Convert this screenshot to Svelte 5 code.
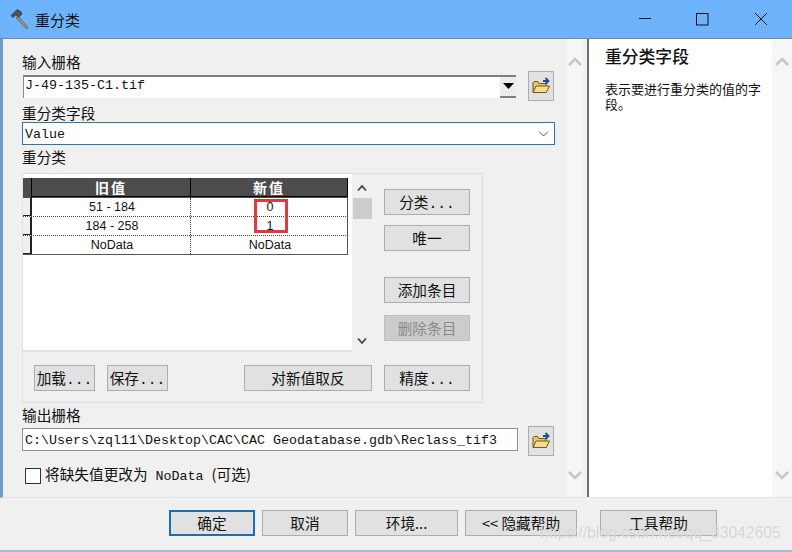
<script lang="ts">
    const rows = [
        { oldVal: '51 - 184', newVal: '0' },
        { oldVal: '184 - 258', newVal: '1' },
        { oldVal: 'NoData', newVal: 'NoData' }
    ];
    const sideButtons = [
        { label: '分类...', cls: 'gap-a' },
        { label: '唯一', cls: 'gap-b' },
        { label: '添加条目', cls: 'gap-c' },
        { label: '删除条目', cls: 'gap-d', disabled: true }
    ];
    const footerButtons = [
        { label: '确定', cls: 'w-ok primary' },
        { label: '取消', cls: 'w-ok' },
        { label: '环境...', cls: 'w-env' },
        { label: '<< 隐藏帮助', cls: 'w-hide' },
        { label: '工具帮助', cls: 'w-tool' }
    ];
</script>

{#snippet folderIcon()}
    <svg width="20" height="18" viewBox="0 0 20 18">
        <path d="M2 5.5 L2 15.5 L15 15.5 L15 6.5 L8 6.5 L6.8 4.5 L3 4.5 Z" fill="#e9c766" stroke="#6d5a25" stroke-width="1" />
        <path d="M2.2 15.5 L5 9 L18.5 9 L15.2 15.5 Z" fill="#f6dd8a" stroke="#6d5a25" stroke-width="1" />
        <path d="M12 4 L16 4 M14.5 1 L17.5 4 L14.5 7" fill="none" stroke="#1f4e8c" stroke-width="1.8" />
    </svg>
{/snippet}

{#snippet scrollColumn(cls)}
    <div class="vscroll {cls}">
        <svg width="16" height="10" viewBox="0 0 16 10"><path d="M2 8 L8 2 L14 8" fill="none" stroke="#c6c6c6" stroke-width="2.5" /></svg>
        <svg width="16" height="10" viewBox="0 0 16 10"><path d="M2 2 L8 8 L14 2" fill="none" stroke="#c6c6c6" stroke-width="2.5" /></svg>
    </div>
{/snippet}

<div class="window">
    <header class="titlebar">
        <svg class="hammer" width="22" height="22" viewBox="0 0 22 22">
            <path d="M9 8 L19 19.5 L17.5 21 L7 10 Z" fill="#9a8f7c" stroke="#5f574a" stroke-width="0.7" />
            <path d="M2 7.5 L8 1.5 L12 3.5 L13 6 L9.5 9.5 L7 7 L3.5 9.5 Z" fill="#4e5358" stroke="#33373a" stroke-width="0.6" />
        </svg>
        <span class="title">重分类</span>
        <div class="winbtns">
            <svg width="14" height="14" viewBox="0 0 14 14"><path d="M1 6.5 H13" stroke="#111" stroke-width="1" /></svg>
            <svg width="14" height="14" viewBox="0 0 14 14"><rect x="0.5" y="1.5" width="11.5" height="11.5" fill="none" stroke="#111" stroke-width="1" /></svg>
            <svg width="14" height="14" viewBox="0 0 14 14"><path d="M1 1 L13 13 M13 1 L1 13" stroke="#111" stroke-width="1" /></svg>
        </div>
    </header>

    <div class="body">
        <main class="pane">
            <div class="label first">输入栅格</div>
            <div class="input-row">
                <div class="input sunken">
                    <span class="mono">J-49-135-C1.tif</span>
                    <div class="drop"><svg width="11" height="6" viewBox="0 0 11 6"><path d="M0 0 H11 L5.5 6 Z" fill="#000" /></svg></div>
                </div>
                <button class="folder">{@render folderIcon()}</button>
            </div>
            <div class="label second">重分类字段</div>
            <div class="combo">
                <span class="mono">Value</span>
                <svg width="11" height="6" viewBox="0 0 11 6"><path d="M1 0.5 L5.5 5 L10 0.5" fill="none" stroke="#555" stroke-width="1" /></svg>
            </div>
            <div class="label third">重分类</div>

            <section class="group">
                <div class="table-row">
                    <div class="table-area">
                        <div class="table">
                            <div class="thead">
                                <div class="sel"></div>
                                <div class="th">旧值</div>
                                <div class="th">新值</div>
                            </div>
                            {#each rows as row}
                                <div class="tr">
                                    <div class="sel"></div>
                                    <div class="td">{row.oldVal}</div>
                                    <div class="td">{row.newVal}</div>
                                </div>
                            {/each}
                            <div class="redbox"></div>
                        </div>
                        <div class="tscroll">
                            <svg class="up" width="12" height="8" viewBox="0 0 12 8"><path d="M2 6.5 L6 2 L10 6.5" fill="none" stroke="#444" stroke-width="1.8" /></svg>
                            <div class="thumb"></div>
                            <svg class="down" width="12" height="8" viewBox="0 0 12 8"><path d="M2 1.5 L6 6 L10 1.5" fill="none" stroke="#444" stroke-width="1.8" /></svg>
                        </div>
                    </div>
                    <div class="side">
                        {#each sideButtons as b}
                            <button class="btn side-btn {b.cls}" class:disabled={b.disabled}>{b.label}</button>
                        {/each}
                    </div>
                </div>
                <div class="group-foot">
                    <button class="btn w-load">加载...</button>
                    <button class="btn w-load save">保存...</button>
                    <button class="btn w-invert">对新值取反</button>
                    <button class="btn w-prec">精度...</button>
                </div>
            </section>

            <div class="label fourth">输出栅格</div>
            <div class="input-row out">
                <div class="input plain"><span class="mono">C:\Users\zql11\Desktop\CAC\CAC Geodatabase.gdb\Reclass_tif3</span></div>
                <button class="folder">{@render folderIcon()}</button>
            </div>
            <div class="check-row">
                <span class="checkbox"></span>
                <span class="check-text">将缺失值更改为<span class="mono">{' NoData '}</span>(可选)</span>
            </div>
        </main>

        {@render scrollColumn('narrow')}
        <div class="divider"></div>

        <aside class="help">
            <h2>重分类字段</h2>
            <p>表示要进行重分类的值的字段。</p>
        </aside>
        {@render scrollColumn('')}
    </div>

    <footer class="footer">
        {#each footerButtons as b}
            <button class="btn {b.cls}">{b.label}</button>
        {/each}
    </footer>

    <div class="watermark">https://blog.csdn.net/qq_33042605</div>
</div>

<style>
    :global(body) {
        margin: 0;
    }

    .window {
        position: relative;
        width: 792px;
        height: 552px;
        display: flex;
        flex-direction: column;
        background: #f0f0f0;
        font-family: "Noto Sans CJK SC", "Liberation Sans", sans-serif;
        font-size: 14.67px;
        color: #111;
        overflow: hidden;
        box-shadow: inset 0 -2px 0 #8fc3e8;
    }

    .titlebar {
        height: 38px;
        flex: none;
        display: flex;
        align-items: center;
        background: #6db4fc;
        border-bottom: 1px solid #7d8790;
    }

    .hammer {
        margin-left: 9px;
    }

    .title {
        margin-left: 4px;
        font-size: 15px;
    }

    .winbtns {
        margin-left: auto;
        margin-right: 24px;
        display: flex;
        gap: 44px;
    }

    .body {
        flex: none;
        height: 458px;
        display: flex;
        border-left: 3px solid #6d9cc8;
        border-bottom: 1px solid #e2e2e2;
    }

    .pane {
        width: 563px;
        flex: none;
        box-sizing: border-box;
        padding-left: 19px;
        background: #f0f0f0;
    }

    .label {
        height: 16px;
        line-height: 16px;
        white-space: nowrap;
    }

    .first { margin-top: 15px; }
    .second { margin-top: 4px; }
    .third { margin-top: 4px; }
    .fourth { margin-top: 4px; }

    .mono {
        font-family: "Liberation Mono", "Noto Sans CJK SC", monospace;
        font-size: 13.33px;
        white-space: pre;
    }

    .input-row {
        width: 531px;
        height: 30px;
        margin-top: 1px;
        margin-left: 1px;
        display: flex;
        align-items: center;
        justify-content: space-between;
    }

    .input-row.out {
        width: 532px;
        margin-top: 3px;
        margin-left: 0;
        align-items: flex-start;
    }

    .input {
        box-sizing: border-box;
        display: flex;
        align-items: center;
        background: #fff;
    }

    .input.sunken {
        width: 493px;
        height: 23px;
        border-top: 2px solid #7f7f7f;
        border-left: 1px solid #8a8a8a;
        padding-left: 1px;
    }

    .input.sunken .mono {
        margin-bottom: 4px;
    }

    .input.sunken .drop {
        margin-left: auto;
        width: 16px;
        height: 21px;
        background: #ececec;
        border-bottom: 2px solid #7f7f7f;
        box-sizing: border-box;
        display: flex;
        align-items: center;
        justify-content: center;
    }

    .input.plain {
        width: 496px;
        height: 23px;
        margin-top: 2px;
        border: 1px solid #8f8f8f;
        padding-left: 2px;
    }

    .input.plain .mono {
        margin-top: 2px;
    }

    .folder {
        width: 26px;
        height: 30px;
        padding: 0;
        box-sizing: border-box;
        border: 1px solid #adadad;
        background: #e1e1e1;
        display: flex;
        align-items: center;
        justify-content: center;
    }

    .combo {
        box-sizing: border-box;
        width: 533px;
        height: 23px;
        margin-top: 1px;
        display: flex;
        align-items: center;
        justify-content: space-between;
        padding: 0 5px 0 2px;
        background: #fff;
        border: 1px solid #2f74ab;
    }

    .combo .mono {
        margin-top: 2px;
    }

    .group {
        box-sizing: border-box;
        width: 461px;
        height: 230px;
        margin-top: 8px;
        border: 1px solid #dcdcdc;
        border-left-color: #e2e2e2;
    }

    .table-row {
        display: flex;
    }

    .table-area {
        width: 349px;
        height: 178px;
        display: flex;
        padding-top: 4px;
        box-sizing: border-box;
        background: #fff;
        border-bottom: 2px solid #e2e2e2;
    }

    .table {
        position: relative;
        width: 325px;
        flex: none;
        background: #fff;
        align-self: flex-start;
        border-bottom: 1px solid #555;
    }

    .thead, .tr {
        display: grid;
        grid-template-columns: 9px 159px 157px;
    }

    .thead {
        height: 20px;
        background: #4c4c4c;
    }

    .thead .sel {
        border-right: 1px solid #000;
    }

    .th {
        box-sizing: border-box;
        height: 19px;
        text-align: center;
        color: #fff;
        font-weight: 700;
        font-size: 14px;
        line-height: 18px;
        letter-spacing: 2px;
        border-right: 1px solid #000;
        border-bottom: 1px solid #000;
    }

    .tr {
        height: 19px;
        box-sizing: border-box;
        border-bottom: 1px dotted #444;
    }

    .tr:nth-last-child(2) {
        height: 18px;
        border-bottom: 0;
    }

    .tr .sel {
        background: #f0f0f0;
        border-right: 2px solid #222;
        border-bottom: 1px solid #222;
        box-sizing: border-box;
    }

    .td {
        box-sizing: border-box;
        padding-left: 2px;
        text-align: center;
        font-family: "Liberation Sans", sans-serif;
        font-size: 12.5px;
        line-height: 18px;
        border-right: 1px dotted #444;
    }

    .tr .td:last-child {
        border-right: 1px solid #555;
    }

    .redbox {
        position: absolute;
        left: 231px;
        top: 21px;
        width: 28px;
        height: 28px;
        border: 3px solid #e5383b;
    }

    .tscroll {
        width: 20px;
        margin-left: 4px;
        margin-top: -4px;
        margin-bottom: -2px;
        background: #f0f0f0;
        display: flex;
        flex-direction: column;
        align-items: center;
    }

    .tscroll .up {
        margin-top: 10px;
    }

    .thumb {
        width: 19px;
        height: 21px;
        margin-top: 6px;
        background: #cdcdcd;
    }

    .tscroll .down {
        margin-top: auto;
        margin-bottom: 7px;
    }

    .btn {
        box-sizing: border-box;
        height: 26px;
        padding: 0 0 2px;
        font-family: "Noto Sans CJK SC", sans-serif;
        font-size: 14.67px;
        color: #111;
        background: #e1e1e1;
        border: 1px solid #adadad;
    }

    .side {
        margin-left: 12px;
        display: flex;
        flex-direction: column;
        width: 86px;
    }

    .side-btn {
        width: 86px;
    }

    .side-btn, .group-foot .btn {
        font-family: "Liberation Mono", "Noto Sans CJK SC", monospace;
    }

    .gap-a { margin-top: 15px; }
    .gap-b { margin-top: 10px; }
    .gap-c { margin-top: 26px; }
    .gap-d { margin-top: 12px; }

    .disabled {
        color: #8a8a8a;
        background: #cccccc;
        border-color: #bfbfbf;
    }

    .group-foot {
        display: flex;
        margin-top: 13px;
        padding-left: 11px;
    }

    .w-load { width: 61px; }
    .save { margin-left: 12px; }
    .w-invert { width: 128px; margin-left: 76px; }
    .w-prec { width: 86px; margin-left: 12px; }

    .check-row {
        margin-top: 10px;
        margin-left: 3px;
        display: flex;
        align-items: center;
        gap: 4px;
        line-height: 16px;
    }

    .checkbox {
        box-sizing: border-box;
        width: 16px;
        height: 16px;
        background: #fff;
        border: 1px solid #333;
    }

    .check-text {
        white-space: pre;
    }

    .vscroll {
        width: 20px;
        flex: none;
        box-sizing: border-box;
        padding: 18px 0 17px;
        background: #f6f6f6;
        display: flex;
        flex-direction: column;
        justify-content: space-between;
        align-items: center;
    }

    .vscroll.narrow {
        width: 17px;
    }

    .divider {
        width: 2px;
        flex: none;
        margin-left: 4px;
        background: #6e6e6e;
    }

    .help {
        flex: none;
        width: 183px;
        box-sizing: border-box;
        padding: 6px 10px 0 16px;
        background: #fff;
    }

    .help h2 {
        margin: 0;
        font-size: 16.8px;
        line-height: 22px;
        font-weight: 500;
    }

    .help p {
        margin: 15px 0 0;
        font-size: 13px;
        line-height: 14.5px;
    }

    .footer {
        flex: 1;
        display: flex;
        padding: 12px 0 0 169px;
        gap: 7px;
    }

    .w-ok { width: 86px; }
    .w-env { width: 103px; }
    .w-hide { width: 112px; }
    .w-tool { width: 117px; margin-left: 16px; }

    .primary {
        border: 2px solid #1a6fb5;
    }

    .watermark {
        position: absolute;
        left: 540px;
        top: 524px;
        font-family: "Liberation Sans", sans-serif;
        font-size: 15.7px;
        color: rgba(200, 200, 200, 0.75);
        text-shadow: 0 0 1px rgba(255, 255, 255, 0.8);
        white-space: nowrap;
    }
</style>
